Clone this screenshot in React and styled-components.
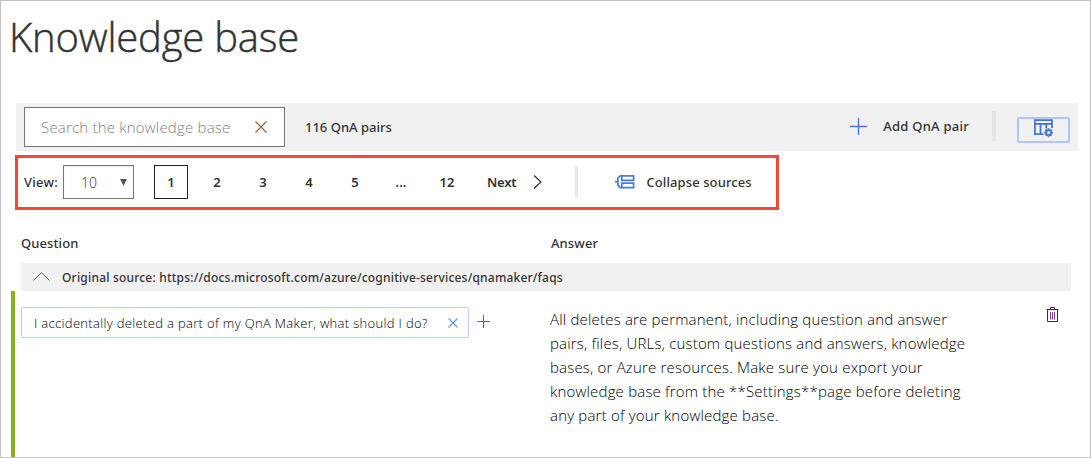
import React from "react";
import styled, { createGlobalStyle } from "styled-components";

const Global = createGlobalStyle`
  *, *::before, *::after { box-sizing: border-box; }
  body { margin: 0; background: #fff; }
  button, input { font: inherit; color: inherit; letter-spacing: inherit; }
`;

const light = `
  font-family: "Open Sans", "Noto Sans", sans-serif;
  font-weight: 300;
`;

const Page = styled.main`
  width: 1091px;
  height: 458px;
  overflow: hidden;
  border: 1px solid #c1c1c1;
  background: #fff;
  color: #333;
  font-family: "Noto Sans", "Open Sans", sans-serif;
  font-size: 13px;
  font-weight: 500;
  display: flex;
  flex-direction: column;
`;

const Title = styled.h1`
  ${light}
  margin: 0 0 0 8px;
  height: 102px;
  padding-top: 9px;
  font-size: 40px;
  line-height: 54px;
  letter-spacing: -0.2px;
  color: #333;
  -webkit-text-stroke: 0.45px #333;
`;

const Bar = styled.div`
  display: flex;
  align-items: center;
  width: 1062px;
  height: 48px;
  margin-left: 15px;
  padding-left: 8px;
  background: #f1f1f1;
`;

const SearchBox = styled.div`
  display: flex;
  align-items: center;
  justify-content: space-between;
  width: 261px;
  height: 40px;
  padding: 0 17px 0 16px;
  border: 1px solid #757575;
  background: #fff;
`;

const SearchInput = styled.input`
  ${light}
  width: 200px;
  padding: 0;
  border: 0;
  outline: 0;
  font-size: 15px;
  letter-spacing: 0.2px;
  &::placeholder { color: #808080; opacity: 1; }
`;

const Label = styled.span`
  letter-spacing: ${(p) => p.$spacing || 0}px;
  margin-left: ${(p) => p.$gap || 0}px;
  line-height: 18px;
  white-space: nowrap;
`;

const PlainButton = styled.button`
  display: flex;
  align-items: center;
  padding: 0;
  border: 0;
  background: none;
`;

const AddButton = styled(PlainButton)`
  margin-left: auto;
  padding-bottom: 2px;
`;

const Divider = styled.span`
  width: ${(p) => p.$width}px;
  height: 30px;
  margin-left: ${(p) => p.$gap}px;
  margin-bottom: ${(p) => p.$lift || 0}px;
  background: ${(p) => p.$color};
`;

const SettingsButton = styled(PlainButton)`
  justify-content: center;
  width: 53px;
  height: 26px;
  margin: 5px 8px 0 21px;
  border: 2px solid #b0c4fb;
  border-radius: 2px;
  align-items: flex-start;
`;

const Pager = styled.nav`
  display: flex;
  align-items: center;
  width: 764px;
  height: 55px;
  margin: 4px 0 0 14px;
  padding: 0 0 1px 6px;
  border: 3px solid #f2483a;
`;

const Select = styled.div`
  ${light}
  display: flex;
  align-items: center;
  justify-content: space-between;
  width: 71px;
  height: 34px;
  margin-left: 5px;
  padding: 1px 6px 0 17px;
  border: 1px solid #757575;
  box-shadow: inset 0 1px 1px #ececec;
  font-size: 14px;
  color: #333;
`;

const Arrow = styled.svg`
  margin-bottom: 1px;
  fill: #555;
`;

const Pages = styled.div`
  display: flex;
  gap: 12px;
  margin-left: 20px;
`;

const PageButton = styled(PlainButton)`
  justify-content: center;
  width: 34px;
  height: 34px;
  border: 1px solid ${(p) => (p.$current ? "#222" : "transparent")};
  font-weight: 600;
`;

const NextButton = styled(PlainButton)`
  gap: 17px;
  margin-left: 23px;
  font-weight: 600;
  letter-spacing: -0.2px;
`;

const CollapseButton = styled(PlainButton)`
  margin-left: 37px;
`;

const Columns = styled.div`
  display: grid;
  grid-template-columns: 530px 1fr;
  margin: 24px 0 0 20px;
  height: 29px;
  line-height: 18px;
  letter-spacing: 0.1px;
`;

const SourceRow = styled.div`
  display: flex;
  align-items: center;
  width: 1050px;
  height: 28px;
  margin-left: 20px;
  padding: 2px 0 0 12px;
  background: #f1f1f1;
  font-size: 12px;
`;

const Chevron = styled.span`
  display: flex;
  padding-bottom: 3px;
`;

const Pair = styled.section`
  flex: 1;
  display: grid;
  grid-template-columns: 529px 1fr 44px;
  align-items: start;
  margin-left: 10px;
  padding-left: 6px;
  border-left: 4px solid #86b11f;
`;

const Questions = styled.div`
  display: flex;
  align-items: center;
  gap: 8px;
  margin-top: 16px;
`;

const QuestionChip = styled.div`
  ${light}
  display: flex;
  align-items: center;
  justify-content: space-between;
  width: 448px;
  height: 31px;
  padding: 0 10px 0 12px;
  border: 1px solid #b7d1f0;
  border-radius: 2px;
  color: #000;
  letter-spacing: 0.33px;
`;

const AddAlternative = styled(PlainButton)`
  padding-bottom: 2px;
`;

const Answer = styled.p`
  ${light}
  margin: 16px 0 0;
  font-size: 15px;
  line-height: 24px;
  letter-spacing: 0.19px;
  color: #000;
`;

const DeleteButton = styled(PlainButton)`
  margin-top: 16px;
`;

const Glyph = styled.svg`
  flex: none;
  fill: none;
  stroke: ${(p) => p.$color || "#333"};
  stroke-width: ${(p) => p.$stroke || 1}px;
`;

const Cross = ({ size, color }) => (
  <Glyph width={size} height={size} viewBox={`0 0 ${size} ${size}`} $color={color} $stroke={1.1}>
    <path d={`M.5 .5L${size - 0.5} ${size - 0.5}M${size - 0.5} .5L.5 ${size - 0.5}`} />
  </Glyph>
);

const pages = ["1", "2", "3", "4", "5", "...", "12"];
const answer = [
  "All deletes are permanent, including question and answer",
  "pairs, files, URLs, custom questions and answers, knowledge",
  "bases, or Azure resources. Make sure you export your",
  "knowledge base from the **Settings**page before deleting",
  "any part of your knowledge base.",
];

export default function App() {
  return (
    <Page>
      <Global />
      <Title>Knowledge base</Title>
      <Bar>
        <SearchBox>
          <SearchInput placeholder="Search the knowledge base" />
          <Cross size={12} color="#985f3c" />
        </SearchBox>
        <Label $gap={20}>116 QnA pairs</Label>
        <AddButton>
          <Glyph width="17" height="17" viewBox="0 0 17 17" $color="#4a78d6" $stroke={1.4}>
            <path d="M0 8.5H17M8.5 0V17" />
          </Glyph>
          <Label $gap={16} $spacing={0.25}>Add QnA pair</Label>
        </AddButton>
        <Divider $width={4} $gap={23} $lift={2} $color="#e5e5e3" />
        <SettingsButton aria-label="View options">
          <Glyph width="19" height="18" viewBox="0 0 19 18" $color="#4376d6" $stroke={1.8}>
            <path d="M9.5 15.2H.9V1.2H18V9M.9 4.8H18M6.5 4.8V15M12.3 4.8V9.5" />
            <circle cx="14.6" cy="13.6" r="2.5" />
            <path d="M14.6 9.2V11M14.6 16.2V18M10.2 13.6H12M17.2 13.6H19M11.5 10.5L12.8 11.8M16.4 15.4L17.7 16.7M17.7 10.5L16.4 11.8M12.8 15.4L11.5 16.7" />
          </Glyph>
        </SettingsButton>
      </Bar>
      <Pager>
        <Label $spacing={0.25}>View:</Label>
        <Select>
          10
          <Arrow width="7" height="7" viewBox="0 0 7 7"><path d="M0 0H7L3.5 7Z" /></Arrow>
        </Select>
        <Pages>
          {pages.map((p) => <PageButton key={p} $current={p === "1"}>{p}</PageButton>)}
        </Pages>
        <NextButton>
          Next
          <Glyph width="9" height="14" viewBox="0 0 9 14" $stroke={1.2}><path d="M1 .5L8 7L1 13.5" /></Glyph>
        </NextButton>
        <Divider $width={3} $gap={33} $color="#e8e5e8" />
        <CollapseButton>
          <Glyph width="20" height="14" viewBox="0 0 20 14" $color="#4c7ad8" $stroke={1.7}>
            <path d="M6.8 .9H18.6V5.3H6.8ZM6.8 8.2H18.6V12.6H6.8ZM6.8 .9H5.2L2.9 3.3V10.2L5.2 12.6H6.8M0 6.7H3" />
          </Glyph>
          <Label $gap={11} $spacing={0.1}>Collapse sources</Label>
        </CollapseButton>
      </Pager>
      <Columns>
        <span>Question</span>
        <span>Answer</span>
      </Columns>
      <SourceRow>
        <Chevron>
          <Glyph width="17" height="9" viewBox="0 0 17 9" $color="#555"><path d="M.5 8.5L8.5 .7L16.5 8.5" /></Glyph>
        </Chevron>
        <Label $gap={12} $spacing={0.2}>
          Original source: https://docs.microsoft.com/azure/cognitive-services/qnamaker/faqs
        </Label>
      </SourceRow>
      <Pair>
        <Questions>
          <QuestionChip>
            I accidentally deleted a part of my QnA Maker, what should I do?
            <Cross size={10} color="#6595d5" />
          </QuestionChip>
          <AddAlternative aria-label="Add alternative question">
            <Glyph width="13" height="13" viewBox="0 0 13 13" $color="#666"><path d="M0 6.5H13M6.5 0V13" /></Glyph>
          </AddAlternative>
        </Questions>
        <Answer>
          {answer.map((line) => <React.Fragment key={line}>{line}<br /></React.Fragment>)}
        </Answer>
        <DeleteButton aria-label="Delete">
          <Glyph width="13" height="16" viewBox="0 0 13 16" $color="#333">
            <path d="M.5 2.5H12.5M4.5 2.5V.5H8.5V2.5M1.5 2.5V14.5H11.5V2.5" />
            <path d="M4.5 5V12.5M6.5 5V12.5M8.5 5V12.5" stroke="#7b3a88" />
          </Glyph>
        </DeleteButton>
      </Pair>
    </Page>
  );
}
